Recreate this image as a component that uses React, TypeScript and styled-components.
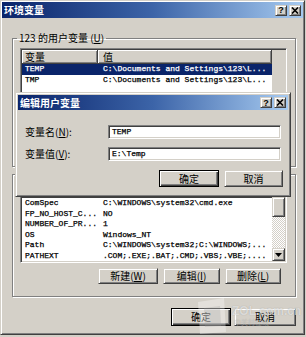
import React from 'react';
import styled, { createGlobalStyle, css } from 'styled-components';

const FACE = '#d4d0c8';
const SHADOW = '#808080';
const DARK = '#404040';
const NAVY = '#0a246a';
const CJK = `"Noto Sans CJK SC", "Noto Sans", sans-serif`;
const MONO = `"Liberation Mono", "Noto Sans CJK SC", monospace`;

const GlobalStyle = createGlobalStyle`
  html, body { margin: 0; padding: 0; background: ${FACE}; }
  body { width: 306px; height: 337px; overflow: hidden; font: 10px ${CJK}; color: #000; }
`;

const raised = css`
  border: 1px solid;
  border-color: ${FACE} ${DARK} ${DARK} ${FACE};
  box-shadow: inset 1px 1px #fff, inset -1px -1px ${SHADOW};
`;

const sunken = css`
  border: 1px solid;
  border-color: ${SHADOW} #fff #fff ${SHADOW};
  box-shadow: inset 1px 1px ${DARK}, inset -1px -1px ${FACE};
`;

const Window = styled.div`
  position: relative;
  box-sizing: border-box;
  width: 305px;
  height: 335px;
  padding: 1px;
  background: ${FACE};
  ${raised};
  display: flex;
  flex-direction: column;
`;

const Dialog = styled.div`
  position: absolute;
  left: 14px;
  top: 91px;
  width: 276px;
  height: 105px;
  box-sizing: border-box;
  padding: 2px;
  background: ${FACE};
  ${raised};
  display: flex;
  flex-direction: column;
`;

const TitleBar = styled.div<{ $h: number }>`
  flex: none;
  height: ${p => p.$h}px;
  display: flex;
  align-items: center;
  justify-content: space-between;
  padding: 0 2px 0 2px;
  background: linear-gradient(90deg, ${NAVY} 0%, #3c64a8 50%, #a6caf0 100%);
  color: #fff;
  font-weight: bold;
  font-size: 10px;
  line-height: 1;
`;

const Caps = styled.div`
  display: flex;
  gap: 2px;
`;

const CapButton = styled.div`
  width: 12px;
  height: 11px;
  box-sizing: border-box;
  background: ${FACE};
  ${raised};
  display: flex;
  align-items: center;
  justify-content: center;
  color: #000;
  font: bold 9px "Liberation Sans", sans-serif;
`;

const Body = styled.div`
  flex: 1;
  display: flex;
  flex-direction: column;
  padding: 14px 0 0 10px;
`;

const Group = styled.fieldset<{ $pt: number; $pb: number; $mt: number }>`
  margin: ${p => p.$mt}px 0 0 0;
  min-width: 0;
  width: 284px;
  box-sizing: border-box;
  padding: ${p => p.$pt}px 8px ${p => p.$pb}px 7px;
  border: 1px solid ${SHADOW};
  box-shadow: inset 1px 1px #fff, 1px 1px #fff;
`;

const Legend = styled.legend`
  margin-left: -3px;
  padding: 0 2px;
  font-size: 10px;
  line-height: 12px;
`;

const Key = styled.span`
  text-decoration: underline;
`;

const ListView = styled.div<{ $h: number }>`
  height: ${p => p.$h}px;
  box-sizing: border-box;
  ${sunken};
  padding: 1px;
  background: #fff;
  display: grid;
  grid-template-columns: 1fr 13px;
  overflow: hidden;
`;

const ListMain = styled.div`
  display: flex;
  flex-direction: column;
  min-width: 0;
`;

const Header = styled.div`
  flex: none;
  display: grid;
  grid-template-columns: 76px 1fr;
  height: 14px;
`;

const HeadCell = styled.div<{ $pad: number }>`
  box-sizing: border-box;
  background: ${FACE};
  border-right: 1px solid ${DARK};
  border-bottom: 1px solid ${DARK};
  box-shadow: inset 1px 1px #fff, inset -1px -1px ${SHADOW};
  padding-left: ${p => p.$pad}px;
  font-size: 10px;
  line-height: 13px;
`;

const Row = styled.div<{ $selected?: boolean }>`
  flex: none;
  display: grid;
  grid-template-columns: 76px 1fr;
  height: 10.5px;
  line-height: 10.5px;
  font: 8px ${MONO};
  -webkit-text-stroke: 0.25px currentColor;
  white-space: nowrap;
  background: ${p => (p.$selected ? NAVY : 'transparent')};
  color: ${p => (p.$selected ? '#fff' : '#000')};
`;

const Cell = styled.span<{ $pad: number }>`
  padding-left: ${p => p.$pad}px;
  overflow: hidden;
`;

const ScrollBar = styled.div<{ $flat?: boolean }>`
  display: flex;
  flex-direction: column;
  background: ${p =>
    p.$flat ? FACE : `repeating-conic-gradient(#fff 0 25%, ${FACE} 0 50%) 0 0 / 2px 2px`};
`;

const ScrollPart = styled.div<{ $h?: number }>`
  flex: ${p => (p.$h ? `none` : 1)};
  height: ${p => (p.$h ? `${p.$h}px` : 'auto')};
  box-sizing: border-box;
  display: flex;
  align-items: center;
  justify-content: center;
`;

const ScrollButton = styled(ScrollPart)`
  background: ${FACE};
  ${raised};
`;

const Buttons = styled.div<{ $mt: number; $pr: number; $gap: number }>`
  display: flex;
  justify-content: flex-end;
  gap: ${p => p.$gap}px;
  margin-top: ${p => p.$mt}px;
  padding-right: ${p => p.$pr}px;
`;

const Footer = styled(Buttons)`
  width: 284px;
`;

const Button = styled.div<{ $w: number; $h: number; $default?: boolean }>`
  width: ${p => p.$w}px;
  height: ${p => p.$h}px;
  box-sizing: border-box;
  background: ${FACE};
  display: flex;
  align-items: center;
  justify-content: center;
  font-size: 10px;
  line-height: 1;
  color: #000;
  ${p =>
    p.$default
      ? css`
          border: 1px solid #000;
          box-shadow: inset 1px 1px #fff, inset -1px -1px ${DARK}, inset -2px -2px ${SHADOW};
        `
      : raised};
`;

const Form = styled.div`
  display: grid;
  grid-template-columns: 83px 173px;
  row-gap: 8px;
  padding: 15px 0 0 7px;
  align-items: center;
`;

const Label = styled.div`
  font-size: 10px;
  line-height: 14px;
`;

const Field = styled.div`
  height: 14px;
  box-sizing: border-box;
  ${sunken};
  background: #fff;
  padding: 0 3px;
  font: 8px ${MONO};
  -webkit-text-stroke: 0.25px #000;
  line-height: 12px;
  white-space: nowrap;
`;

const Watermark = styled.div`
  position: absolute;
  left: 193px;
  top: 295px;
  display: flex;
  align-items: flex-start;
  gap: 2px;
  pointer-events: none;
`;

const MarkText = styled.div`
  display: flex;
  flex-direction: column;
  padding-top: 9px;
  color: rgba(255, 255, 255, 0.6);
  text-shadow: 0 0 1px rgba(0, 0, 0, 0.25);
`;

const MarkBrand = styled.span`
  font: bold 12px "Liberation Sans", sans-serif;
  line-height: 13px;
`;

const MarkSub = styled.span`
  font-size: 7px;
  line-height: 9px;
  padding-left: 2px;
  color: rgba(255, 255, 255, 0.35);
`;

const CloseGlyph = () => (
  <svg width="8" height="7" viewBox="0 0 8 7">
    <path d="M1 0.5 L7 6.5 M7 0.5 L1 6.5" stroke="#000" strokeWidth="1.6" />
  </svg>
);

const Arrow = () => (
  <svg width="7" height="4" viewBox="0 0 7 4">
    <path d="M0 0 H7 L3.5 4 Z" fill="#000" />
  </svg>
);

const Caption = ({ title, h }: { title: string; h: number }) => (
  <TitleBar $h={h}>
    <span>{title}</span>
    <Caps>
      <CapButton>?</CapButton>
      <CapButton>
        <CloseGlyph />
      </CapButton>
    </Caps>
  </TitleBar>
);

const userVars = [
  ['TEMP', 'C:\\Documents and Settings\\123\\L...'],
  ['TMP', 'C:\\Documents and Settings\\123\\L...'],
];

const systemVars = [
  ['ComSpec', 'C:\\WINDOWS\\system32\\cmd.exe'],
  ['FP_NO_HOST_C...', 'NO'],
  ['NUMBER_OF_PR...', '1'],
  ['OS', 'Windows_NT'],
  ['Path', 'C:\\WINDOWS\\system32;C:\\WINDOWS;...'],
  ['PATHEXT', '.COM;.EXE;.BAT;.CMD;.VBS;.VBE;....'],
];

const VarList = ({
  rows,
  height,
  selected,
  flatBar,
}: {
  rows: string[][];
  height: number;
  selected?: number;
  flatBar?: boolean;
}) => (
  <ListView $h={height}>
    <ListMain>
      <Header>
        <HeadCell $pad={3}>变量</HeadCell>
        <HeadCell $pad={5}>值</HeadCell>
      </Header>
      {rows.map(([name, value], i) => (
        <Row key={name} $selected={i === selected}>
          <Cell $pad={3}>{name}</Cell>
          <Cell $pad={5}>{value}</Cell>
        </Row>
      ))}
    </ListMain>
    {flatBar ? (
      <ScrollBar $flat />
    ) : (
      <ScrollBar>
        <ScrollButton $h={13} />
        <ScrollButton $h={20} />
        <ScrollPart />
        <ScrollButton $h={13}>
          <Arrow />
        </ScrollButton>
      </ScrollBar>
    )}
  </ListView>
);

const App = () => {
  return (
    <>
      <GlobalStyle />
      <Window>
        <Caption title="环境变量" h={16} />
        <Body>
          <Group $mt={0} $pt={4} $pb={6}>
            <Legend>
              123 的用户变量 (<Key>U</Key>)
            </Legend>
            <VarList rows={userVars} height={112} selected={0} flatBar />
          </Group>
          <Group $mt={1} $pt={2} $pb={12}>
            <Legend>
              系统变量(<Key>S</Key>)
            </Legend>
            <VarList rows={systemVars} height={81} />
            <Buttons $mt={5} $pr={6} $gap={5}>
              <Button $w={60} $h={16}>
                新建(<Key>W</Key>)
              </Button>
              <Button $w={57} $h={16}>
                编辑(<Key>I</Key>)
              </Button>
              <Button $w={56} $h={16}>
                删除(<Key>L</Key>)
              </Button>
            </Buttons>
          </Group>
          <Footer $mt={11} $pr={2} $gap={3}>
            <Button $w={60} $h={18} $default>
              确定
            </Button>
            <Button $w={62} $h={18}>
              取消
            </Button>
          </Footer>
        </Body>

        <Dialog>
          <Caption title="编辑用户变量" h={15} />
          <Form>
            <Label>
              变量名(<Key>N</Key>):
            </Label>
            <Field>TEMP</Field>
            <Label>
              变量值(<Key>V</Key>):
            </Label>
            <Field>E:\Temp</Field>
          </Form>
          <Buttons $mt={9} $pr={5} $gap={5}>
            <Button $w={60} $h={17} $default>
              确定
            </Button>
            <Button $w={59} $h={17}>
              取消
            </Button>
          </Buttons>
        </Dialog>

        <Watermark>
          <svg width="36" height="40" viewBox="0 0 36 40">
            <path d="M4 6 L30 2 L32 36 L6 38 Z" fill="rgba(255,255,255,0.35)" />
            <path d="M10 12 L26 10 L27 30 L11 31 Z" fill="rgba(150,150,150,0.25)" />
          </svg>
          <MarkText>
            <MarkBrand>ZOL.com.cn</MarkBrand>
            <MarkSub>中关村在线</MarkSub>
          </MarkText>
        </Watermark>
      </Window>
    </>
  );
};

export default App;
